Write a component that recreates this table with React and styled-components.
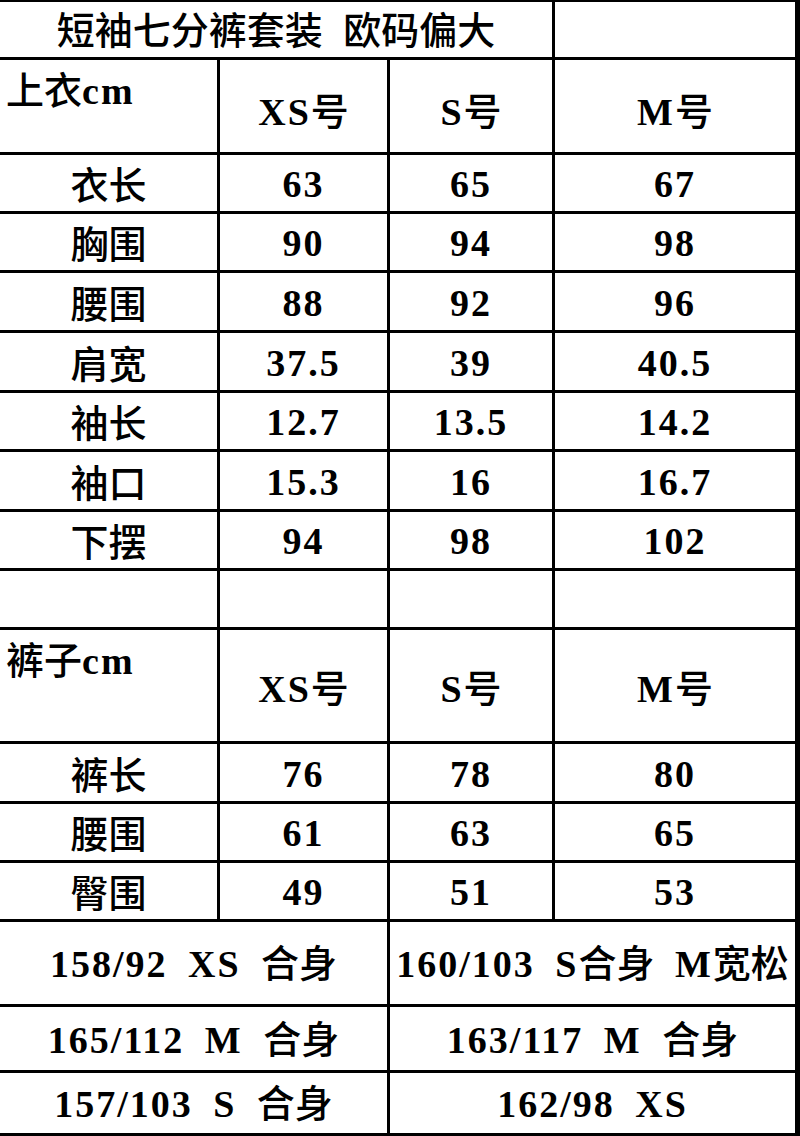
import React from 'react'
import styled, { createGlobalStyle } from 'styled-components'

const GlobalStyle = createGlobalStyle`
  body {
    margin: 0;
    background: #fff;
  }
`

const Sheet = styled.div`
  display: grid;
  width: 798px;
  grid-template-columns: 217px 167px 162px 240px;
  grid-template-rows: 55px 92px 56px 56px 57px 57px 56px 57px 56px 56px 111px 57px 56px 56px 82px 63px 60px;
  gap: 3px;
  padding: 2px 3px 3px 0;
  background: #000;
  font-family: "Noto Sans CJK SC", sans-serif;
  font-weight: 500;
  font-size: 38px;
  line-height: 1.15;
  color: #000;
`

const Cell = styled.div`
  background: #fff;
  display: flex;
  align-items: ${p => (p.$corner ? 'flex-start' : 'center')};
  justify-content: ${p => (p.$corner ? 'flex-start' : 'center')};
  grid-column: span ${p => p.$span || 1};
  padding: ${p => (p.$corner ? '6px 0 0 6px' : `${p.$pt || 0}px 0 0 0`)};
  white-space: nowrap;
  min-width: 0;
`

const Text = styled.span`
  word-spacing: 9px;
`

const Lat = styled.span`
  font-family: "Liberation Serif", serif;
  font-weight: 700;
  letter-spacing: 2px;
`

// wrap the latin runs so digits get the heavy serif face
function mix(text) {
  const parts = text.split(/([\x20-\x7e]+)/).map((part, i) =>
    /^[\x20-\x7e]+$/.test(part) ? <Lat key={i}>{part}</Lat> : part
  )
  return <Text>{parts}</Text>
}

const tops = [
  ['衣长', '63', '65', '67'],
  ['胸围', '90', '94', '98'],
  ['腰围', '88', '92', '96'],
  ['肩宽', '37.5', '39', '40.5'],
  ['袖长', '12.7', '13.5', '14.2'],
  ['袖口', '15.3', '16', '16.7'],
  ['下摆', '94', '98', '102'],
]

const pants = [
  ['裤长', '76', '78', '80'],
  ['腰围', '61', '63', '65'],
  ['臀围', '49', '51', '53'],
]

const fits = [
  ['158/92 XS 合身', '160/103 S合身 M宽松'],
  ['165/112 M 合身', '163/117 M 合身'],
  ['157/103 S 合身', '162/98 XS'],
]

function Header({ label, pt }) {
  return (
    <>
      <Cell $corner>{mix(label)}</Cell>
      <Cell $pt={pt}>{mix('XS号')}</Cell>
      <Cell $pt={pt}>{mix('S号')}</Cell>
      <Cell $pt={pt}>{mix('M号')}</Cell>
    </>
  )
}

function Rows({ data }) {
  return data.map((row, r) =>
    row.map((v, c) => <Cell key={r + '-' + c}>{mix(v)}</Cell>)
  )
}

export default function App() {
  return (
    <>
      <GlobalStyle />
      <Sheet>
        <Cell $span={3}>{mix('短袖七分裤套装 欧码偏大')}</Cell>
        <Cell />
        <Header label="上衣cm" pt={10} />
        <Rows data={tops} />
        <Cell />
        <Cell />
        <Cell />
        <Cell />
        <Header label="裤子cm" pt={4} />
        <Rows data={pants} />
        {fits.map((pair, i) => (
          <React.Fragment key={i}>
            <Cell $span={2}>{mix(pair[0])}</Cell>
            <Cell $span={2}>{mix(pair[1])}</Cell>
          </React.Fragment>
        ))}
      </Sheet>
    </>
  )
}
